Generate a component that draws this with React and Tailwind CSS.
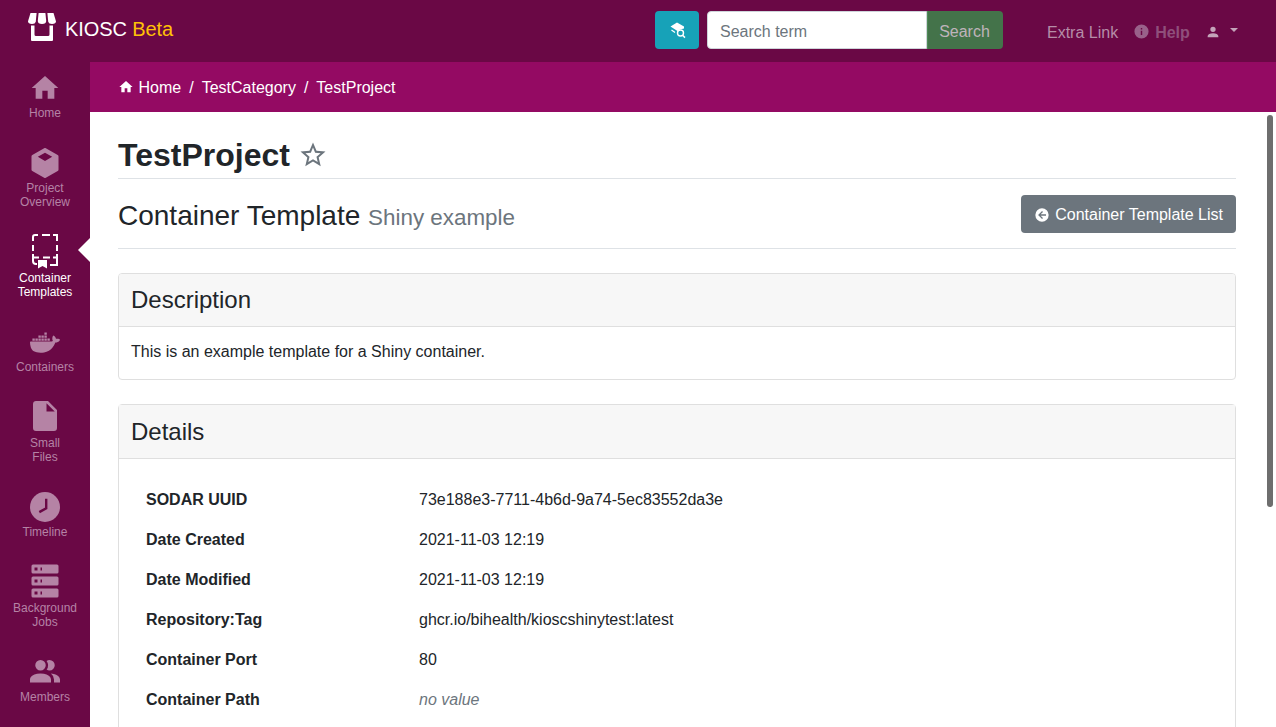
const P = {
  home: "M10,20V14H14V20H19V12H22L12,3L2,12H5V20H10Z",
  cube: "M21,16.5C21,16.88 20.79,17.21 20.47,17.38L12.57,21.82C12.41,21.94 12.21,22 12,22C11.79,22 11.59,21.94 11.43,21.82L3.53,17.38C3.21,17.21 3,16.88 3,16.5V7.5C3,7.12 3.21,6.79 3.53,6.62L11.43,2.18C11.59,2.06 11.79,2 12,2C12.21,2 12.41,2.06 12.57,2.18L20.47,6.62C20.79,6.79 21,7.12 21,7.5V16.5M12,5.2L7.2,7.9L12,10.6L16.8,7.9L12,5.2Z",
  file: "M13,9V3.5L18.5,9M6,2C4.89,2 4,2.89 4,4V20A2,2 0 0,0 6,22H18A2,2 0 0,0 20,20V8L14,2H6Z",
  server: "M4,1H20A1,1 0 0,1 21,2V6A1,1 0 0,1 20,7H4A1,1 0 0,1 3,6V2A1,1 0 0,1 4,1M4,9H20A1,1 0 0,1 21,10V14A1,1 0 0,1 20,15H4A1,1 0 0,1 3,14V10A1,1 0 0,1 4,9M4,17H20A1,1 0 0,1 21,18V22A1,1 0 0,1 20,23H4A1,1 0 0,1 3,22V18A1,1 0 0,1 4,17M9,5H10V3H9V5M9,13H10V11H9V13M9,21H10V19H9V21M5,3V5H7V3H5M5,11V13H7V11H5M5,19V21H7V19H5Z",
  members: "M16 17V19H2V17S2 13 9 13 16 17 16 17M12.5 7.5A3.5 3.5 0 1 0 9 11A3.5 3.5 0 0 0 12.5 7.5M15.94 13A5.32 5.32 0 0 1 18 17V19H22V17S22 13.37 15.94 13M15 4A3.39 3.39 0 0 0 13.07 4.59A5 5 0 0 1 13.07 10.41A3.39 3.39 0 0 0 15 11A3.5 3.5 0 0 0 15 4Z",
  star: "M12,15.39L8.24,17.66L9.23,13.38L5.91,10.5L10.29,10.13L12,6.09L13.71,10.13L18.09,10.5L14.77,13.38L15.76,17.66M22,9.24L14.81,8.63L12,2L9.19,8.63L2,9.24L7.45,13.97L5.82,21L12,17.27L18.18,21L16.54,13.97L22,9.24Z",
  back: "M2,12A10,10 0 0,1 12,2A10,10 0 0,1 22,12A10,10 0 0,1 12,22A10,10 0 0,1 2,12M18,11H10L13.5,7.5L12.08,6.08L6.16,12L12.08,17.92L13.5,16.5L10,13H18V11Z",
  info: "M13,9H11V7H13M13,17H11V11H13M12,2A10,10 0 0,0 2,12A10,10 0 0,0 12,22A10,10 0 0,0 22,12A10,10 0 0,0 12,2Z",
  user: "M12,4A4,4 0 0,1 16,8A4,4 0 0,1 12,12A4,4 0 0,1 8,8A4,4 0 0,1 12,4M12,14C16.42,14 20,15.79 20,18V20H4V18C4,15.79 7.58,14 12,14Z",
};

function Ic({ d, className }) {
  return (
    <svg viewBox="0 0 24 24" className={className} fill="currentColor">
      <path d={d} fillRule="evenodd" />
    </svg>
  );
}

function TemplateIcon({ className }) {
  return (
    <svg viewBox="0 0 28 36" className={className} fill="none" stroke="currentColor" strokeWidth="2">
      <path d="M2 8V4Q2 2 4 2H7M11 2H19M22 2H26V8M26 12V18M26 21V32H19M2 12V18M2 21V28Q2 31 5 31H6M2 24.5H8M12 24.5H19M22 24.5H26" />
      <path d="M7 27H16V35.5L11.5 33L7 35.5Z" fill="currentColor" stroke="none" />
    </svg>
  );
}

function DockerIcon({ className }) {
  return (
    <svg viewBox="0 0 24 24" className={className} fill="currentColor">
      <path d="M21.81 10.25C21.75 10.21 21.25 9.82 20.17 9.82C19.89 9.82 19.61 9.85 19.33 9.9C19.12 8.5 17.95 7.79 17.9 7.76L17.61 7.59L17.43 7.86C17.19 8.22 17 8.63 16.92 9.05C16.72 9.85 16.84 10.61 17.25 11.26C16.76 11.54 15.96 11.61 15.79 11.61H2.62C2.28 11.61 2 11.89 2 12.24C2 13.39 2.18 14.54 2.58 15.62C3.03 16.81 3.71 17.69 4.58 18.23C5.56 18.83 7.17 19.17 9 19.17C9.79 19.17 10.61 19.1 11.42 18.95C12.54 18.75 13.62 18.36 14.61 17.79C15.43 17.32 16.16 16.72 16.78 16C17.83 14.83 18.45 13.5 18.9 12.35H19.09C20.23 12.35 20.94 11.89 21.33 11.5C21.59 11.26 21.79 10.97 21.92 10.63L22 10.39L21.81 10.25Z" />
      <path d="M3.6 9.6h1.6v1.6H3.6zM5.6 9.6h1.6v1.6H5.6zM7.6 9.6h1.6v1.6H7.6zM9.6 9.6h1.6v1.6H9.6zM11.6 9.6h1.6v1.6h-1.6zM13.6 9.6h1.6v1.6h-1.6zM7.6 7.6h1.6v1.6H7.6zM9.6 7.6h1.6v1.6H9.6zM11.6 7.6h1.6v1.6h-1.6zM11.6 5.6h1.6v1.6h-1.6z" />
    </svg>
  );
}

function ClockIcon({ className }) {
  return (
    <svg viewBox="0 0 24 24" className={className}>
      <circle cx="12" cy="12" r="10" fill="currentColor" />
      <path d="M12.8 6.5V12.8L8.2 15.4" fill="none" stroke="#6a0845" strokeWidth="1.6" />
    </svg>
  );
}

function StoreLogo({ className }) {
  return (
    <svg viewBox="0 0 28 28" className={className} fill="white">
      <path d="M2.5 0H8.6L7.8 8.5Q7.2 11 4 11Q-0.4 11 0.1 8Z" />
      <path d="M10.6 0H17.4L18.2 8Q18.2 11 14 11Q9.8 11 9.8 8Z" />
      <path d="M19.4 0H25.5L27.9 8Q28.4 11 24 11Q20.8 11 20.2 8.5Z" />
      <path d="M3 12.5H6.5V21.5Q6.5 23 8 23H20Q21.5 23 21.5 21.5V12.5H25V27Q25 28 24 28H4Q3 28 3 27Z" />
    </svg>
  );
}

function CapSearchIcon({ className }) {
  return (
    <svg viewBox="0 0 18 18" className={className} fill="white">
      <path d="M7 0.5L14 4.5L14 6.5L10 7.5L8.2 9.5L0.5 4.5Z" />
      <path d="M1.5 8L5 10.5" stroke="white" strokeWidth="1.3" fill="none" />
      <circle cx="10.5" cy="11" r="3" fill="none" stroke="white" strokeWidth="1.4" />
      <path d="M12.6 13.2L15 15.6" stroke="white" strokeWidth="1.5" />
    </svg>
  );
}

const sideItems = [
  { label: ["Home"], icon: <Ic d={P.home} className="w-[32px] h-[32px]" /> },
  { label: ["Project", "Overview"], icon: <Ic d={P.cube} className="w-[36px] h-[36px]" /> },
  { label: ["Container", "Templates"], icon: <TemplateIcon className="w-[28px] h-[36px]" />, active: true, tall: true },
  { label: ["Containers"], icon: <DockerIcon className="w-[36px] h-[36px]" /> },
  { label: ["Small", "Files"], icon: <Ic d={P.file} className="w-[36px] h-[36px]" />, tall: true },
  { label: ["Timeline"], icon: <ClockIcon className="w-[36px] h-[36px]" /> },
  { label: ["Background", "Jobs"], icon: <Ic d={P.server} className="w-[36px] h-[36px]" />, tall: true },
  { label: ["Members"], icon: <Ic d={P.members} className="w-[36px] h-[36px]" /> },
];

const rows = [
  ["SODAR UUID", "73e188e3-7711-4b6d-9a74-5ec83552da3e"],
  ["Date Created", "2021-11-03 12:19"],
  ["Date Modified", "2021-11-03 12:19"],
  ["Repository:Tag", "ghcr.io/bihealth/kioscshinytest:latest"],
  ["Container Port", "80"],
  ["Container Path", "no value", true],
];

export default function App() {
  return (
    <div className="h-screen overflow-hidden flex flex-col bg-white text-[#212529] text-base font-['Liberation_Sans',Arial,sans-serif]">
      <header className="h-[62px] shrink-0 bg-[#6a0845] flex items-start pl-[28px]">
        <div className="flex items-center h-[58px] w-[627px]">
          <StoreLogo className="w-[28px] h-[28px] mt-[-4px]" />
          <span className="ml-[9px] text-xl text-white leading-[24px] tracking-[-0.1px]">KIOSC <span className="text-[#ffc107]">Beta</span></span>
        </div>
        <div className="mt-[11px] flex">
          <button className="w-[44px] h-[38px] rounded bg-[#17a2b8] flex items-center justify-center pl-[4px] pt-[2px]">
            <CapSearchIcon className="w-[18px] h-[18px]" />
          </button>
          <input
            placeholder="Search term"
            className="ml-2 w-[220px] h-[38px] bg-white rounded-l border border-[#ced4da] px-3 pt-[4px] text-base placeholder:text-[#6c757d] outline-none"
          />
          <button className="w-[76px] h-[38px] rounded-r bg-[#44734a] text-[#bfb3bb] text-base border-l border-[#4d8a55] pt-[3px] pr-[2px]">Search</button>
        </div>
        <nav className="flex items-center h-[62px] ml-[44px] pt-[4px]">
          <span className="text-[#b58da8]">Extra Link</span>
          <Ic d={P.info} className="ml-[15px] mb-[3px] w-[17px] h-[17px] text-[#99618a]" />
          <span className="ml-[5px] font-bold text-[#8f4f7b]">Help</span>
          <Ic d={P.user} className="ml-[15px] mb-[3px] w-[16px] h-[16px] text-[#c4a3b9]" />
          <span className="ml-[9px] mb-[7px] w-0 h-0 border-x-[4px] border-t-[4px] border-x-transparent border-t-[#c4a3b9]" />
        </nav>
      </header>

      <div className="flex-1 flex min-h-0">
        <aside className="w-[90px] shrink-0 bg-[#6a0845] overflow-hidden flex flex-col gap-6 pt-[7px] text-[#b583a5]">
          {sideItems.map((it) => (
            <div key={it.label[0]} className={`relative flex flex-col items-center ${it.active ? "text-white" : ""}`}>
              <div className={it.tall ? "h-[38px] flex items-start justify-center" : "h-[37px] flex items-center justify-center"}>{it.icon}</div>
              <div className="text-xs leading-[14px] text-center">
                {it.label.map((l) => <div key={l}>{l}</div>)}
              </div>
              {it.active && (
                <span className="absolute right-0 top-[5px] w-0 h-0 border-y-[12px] border-r-[12px] border-y-transparent border-r-white" />
              )}
            </div>
          ))}
        </aside>

        <main className="flex-1 min-w-0 flex flex-col relative">
          <div className="h-[50px] shrink-0 bg-[#940a63] text-white flex items-center px-[28px] pt-[2px]">
            <Ic d={P.home} className="w-[16px] h-[16px] mr-[4.5px] mb-[3px]" />
            <span>Home</span>
            <span className="px-2">/</span>
            <span>TestCategory</span>
            <span className="px-2">/</span>
            <span>TestProject</span>
          </div>

          <div className="flex-1 overflow-hidden pl-[28px] pr-[40px]">
            <div className="pt-[24px] h-[67px] border-b border-[#dee2e6] flex items-center pb-[4px] box-border">
              <h1 className="text-[32px] leading-[38px] font-bold">TestProject</h1>
              <Ic d={P.star} className="ml-[8px] w-[30px] h-[30px] text-[#6c757d]" />
            </div>
            <div className="h-[70px] border-b border-[#dee2e6] flex items-center justify-between">
              <h2 className="text-[28px] leading-[34px] mt-[6px]">
                Container Template <small className="text-[22.4px] text-[#6c757d]">Shiny example</small>
              </h2>
              <button className="h-[38px] rounded bg-[#6c757d] text-white px-[13px] pt-[2px] flex items-center gap-[5px]">
                <Ic d={P.back} className="w-[16px] h-[16px]" />
                Container Template List
              </button>
            </div>

            <section className="mt-6 rounded border border-[#dfdfdf] overflow-hidden">
              <div className="h-[53px] bg-[#f7f7f7] border-b border-[#dfdfdf] px-3 flex items-center text-2xl">Description</div>
              <div className="h-[52px] px-3 pb-[2px] flex items-center">This is an example template for a Shiny container.</div>
            </section>

            <section className="mt-6 rounded border border-[#dfdfdf]">
              <div className="h-[54px] bg-[#f7f7f7] border-b border-[#dfdfdf] px-3 pt-[1px] flex items-center text-2xl">Details</div>
              <div className="pt-[21px] px-[27px] pb-5">
                {rows.map(([k, v, muted]) => (
                  <div key={k} className="flex h-[40px] items-center">
                    <div className="w-[273px] font-bold">{k}</div>
                    <div className={muted ? "italic text-[#6c757d]" : ""}>{v}</div>
                  </div>
                ))}
              </div>
            </section>
          </div>

          <div className="absolute top-[53px] right-[3px] w-[6px] h-[392px] rounded-full bg-[#6e6e6e]" />
        </main>
      </div>
    </div>
  );
}
